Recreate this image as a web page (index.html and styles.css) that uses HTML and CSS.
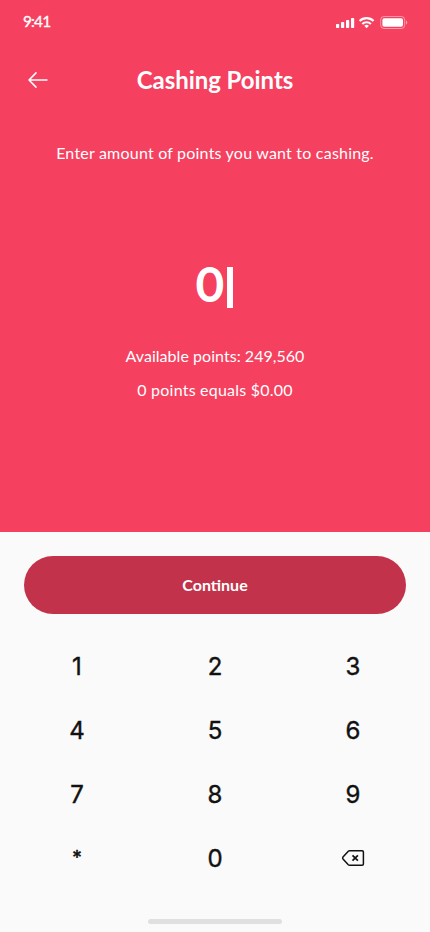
FILE: index.html
```html
<!DOCTYPE html>
<html lang="en">
<head>
<meta charset="utf-8">
<meta name="viewport" content="width=device-width, initial-scale=1">
<title>Cashing Points</title>
<link rel="stylesheet" href="styles.css">
</head>
<body>
<main class="screen">
  <section class="hero">
    <div class="status">
      <span class="time">9:41</span>
      <svg class="status-icons" width="72" height="16" viewBox="0 0 72 16" fill="#fff">
        <rect x="0" y="9" width="3.2" height="4" rx=".7"/>
        <rect x="5" y="7" width="3.2" height="6" rx=".7"/>
        <rect x="10" y="5" width="3.2" height="8" rx=".7"/>
        <rect x="15" y="3" width="3.2" height="10" rx=".7"/>
        <g fill="none" stroke="#fff" stroke-width="2.2">
          <path d="M23.6 6a10 10 0 0 1 14 0"/>
          <path d="M26.3 9a6.2 6.2 0 0 1 8.6 0"/>
        </g>
        <path d="M28.3 10.8a3.5 3.5 0 0 1 4.6 0L30.6 13.2z"/>
        <rect x="44.7" y="1.5" width="24" height="12" rx="3.3" fill="none" stroke="#fff" stroke-opacity=".45"/>
        <rect x="46.4" y="3.2" width="20.6" height="8.6" rx="1.8"/>
        <path d="M70 5.5v4a2.2 2.2 0 0 0 0-4z" fill-opacity=".5"/>
      </svg>
    </div>
    <header class="topbar">
      <svg class="back" width="20" height="16" viewBox="0 0 20 16" fill="none" stroke="#fff" stroke-width="1.5" stroke-linecap="round" stroke-linejoin="round"><path d="M19 8H1M8 .9L1 8l7 7.1"/></svg>
      <h1 class="title">Cashing Points</h1>
    </header>
    <p class="prompt">Enter amount of points you want to cashing.</p>
    <div class="amount"><span class="digit">0</span><span class="caret"></span></div>
    <p class="info available">Available points: 249,560</p>
    <p class="info equals">0 points equals $0.00</p>
  </section>
  <section class="panel">
    <button class="continue">Continue</button>
    <div class="keypad">
      <button class="key">1</button><button class="key">2</button><button class="key">3</button>
      <button class="key">4</button><button class="key">5</button><button class="key">6</button>
      <button class="key">7</button><button class="key">8</button><button class="key">9</button>
      <button class="key star">*</button><button class="key">0</button>
      <button class="key delete" aria-label="Delete"><svg width="24" height="18" viewBox="0 0 24 18" fill="none" stroke="#111" stroke-width="1.5" stroke-linejoin="round"><path d="M8.6 1.7h12.6q1.2 0 1.2 1.2v12.2q0 1.2-1.2 1.2H8.6q-.7 0-1.3-.6L2 10Q1.2 9 2 8L7.3 2.3q.6-.6 1.3-.6z"/><path d="M11.5 6.3l5.4 5.4M16.9 6.3l-5.4 5.4" stroke-width="1.7"/></svg></button>
    </div>
    <div class="home"></div>
  </section>
</main>
</body>
</html>
```
FILE: styles.css
```css
* { box-sizing: border-box; }
body { margin: 0; }
h1, p { margin: 0; }
button { border: 0; padding: 0; background: none; }
.screen {
  width: 430px;
  height: 932px;
  display: flex;
  flex-direction: column;
  font-family: Lato, sans-serif;
  background: #fafafa;
  overflow: hidden;
}
.hero { height: 532px; background: #f5415f; color: #fff; flex: none; }
.status {
  height: 44px;
  padding: 0 22px 0 23px;
  display: flex;
  align-items: center;
  justify-content: space-between;
}
.time {
  margin-bottom: 2px;
  font-size: 15.5px;
  font-weight: 400;
  line-height: 20px;
  letter-spacing: -.9px;
  -webkit-text-stroke: .3px #fff;
}
.status-icons { margin-top: 2px; }
.topbar {
  height: 72px;
  padding: 0 28px;
  display: grid;
  grid-template-columns: 20px 1fr 20px;
  align-items: center;
}
.title { text-align: center; font-size: 24px; line-height: 32px; font-weight: 700; letter-spacing: -.05px; white-space: nowrap; }
.prompt { margin-top: 25px; font-size: 16px; line-height: 24px; letter-spacing: .21px; text-align: center; white-space: nowrap; }
.amount {
  margin-top: 84px;
  height: 71px;
  padding-right: 1px;
  display: flex;
  justify-content: center;
  align-items: center;
  gap: 3px;
}
.digit {
  margin-bottom: 4px;
  font-size: 47px;
  line-height: 58px;
  font-weight: 400;
  -webkit-text-stroke: 1.9px #fff;
}
.caret { width: 6px; height: 41px; background: #fff; margin-top: 5px; }
.info { font-size: 16px; line-height: 24px; text-align: center; white-space: nowrap; }
.available { margin-top: 24px; letter-spacing: .04px; }
.equals { margin-top: 10px; letter-spacing: .22px; }
.panel { flex: 1; padding: 24px 24px 8px; display: flex; flex-direction: column; }
.continue {
  height: 58px;
  border-radius: 29px;
  background: #c2324a;
  color: #fff;
  font: 700 16px/24px Lato, sans-serif;
}
.keypad {
  margin-top: 20px;
  margin-inline: -16px;
  display: grid;
  grid-template-columns: repeat(3, 138px);
  grid-auto-rows: 64px;
}
.key {
  display: flex;
  align-items: center;
  justify-content: center;
  padding-top: 1px;
  font: 400 24px/32px Inter, sans-serif;
  -webkit-text-stroke: .4px #111;
  color: #111;
}
.star { padding-top: 0; font-size: 19px; -webkit-text-stroke-width: .5px; }
.delete { padding-top: 0; }
.home { width: 134px; height: 5px; border-radius: 3px; background: #e0e0e0; margin: auto auto 0; }
```
